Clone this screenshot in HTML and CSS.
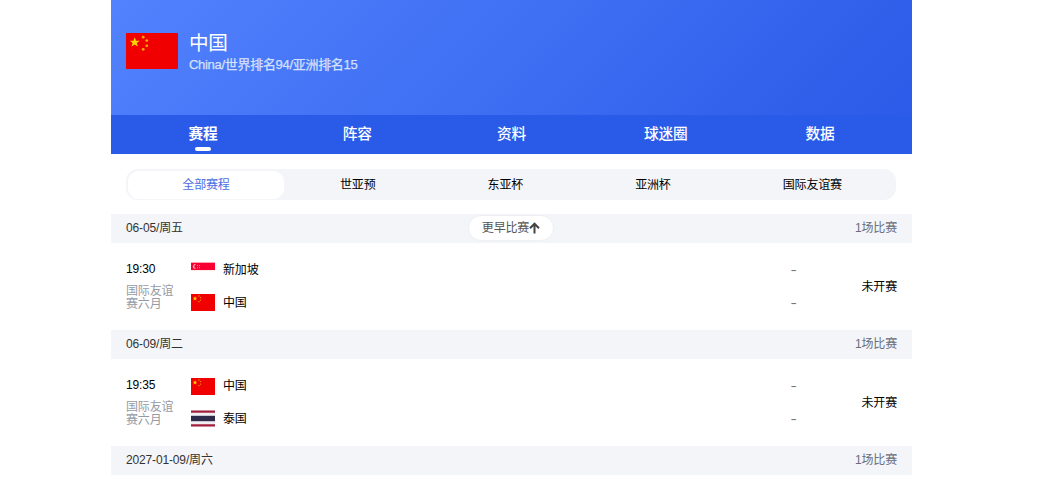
FILE: index.html
```html
<!DOCTYPE html>
<html lang="zh-CN">
<head>
<meta charset="utf-8">
<title>中国</title>
<link rel="stylesheet" href="styles.css">
</head>
<body>
<svg class="defs" aria-hidden="true">
  <symbol id="cn" viewBox="0 0 52 36" preserveAspectRatio="none">
    <rect width="52" height="36" fill="#f00000"/>
    <path fill="#ffd400" d="M8.7 4.2l1.3 3.5h3.7l-2.9 2.2 1.1 3.6-3.2-2.1-3.2 2.1 1.1-3.6-2.9-2.2h3.7z"/>
    <g fill="#f5a800"><circle cx="17.2" cy="4.2" r="1.4"/><circle cx="20.8" cy="7.6" r="1.4"/><circle cx="20.8" cy="12.8" r="1.4"/><circle cx="17.2" cy="16.3" r="1.4"/></g>
  </symbol>
</svg>
<main class="page">
  <header class="hero">
    <svg class="hero-flag"><use href="#cn"/></svg>
    <div class="team">
      <h1 class="team-name">中国</h1>
      <p class="team-info">China/世界排名94/亚洲排名15</p>
    </div>
  </header>
  <nav class="tabs">
    <a class="tab active">赛程</a><a class="tab">阵容</a><a class="tab">资料</a><a class="tab">球迷圈</a><a class="tab">数据</a>
  </nav>
  <nav class="filters">
    <a class="filter selected">全部赛程</a><a class="filter">世亚预</a><a class="filter">东亚杯</a><a class="filter">亚洲杯</a><a class="filter">国际友谊赛</a>
  </nav>
  <div class="day">
    <span>06-05/周五</span>
    <button class="earlier">更早比赛<svg class="arrow" viewBox="0 0 11 12"><path d="M5.5 11.5V2M1 6.2l4.5-4.5L10 6.2" fill="none" stroke="#444" stroke-width="2"/></svg></button>
    <span class="count">1场比赛</span>
  </div>
  <section class="match">
    <div class="when"><time class="time">19:30</time><span class="league">国际友谊赛六月</span></div>
    <div class="sides">
      <div class="side"><svg class="flag" viewBox="0 0 24 17"><path fill="#fff" d="M0 0h24v17H0z"/><path fill="#f9a3b3" d="M0 0h24v1H0z"/><path fill="#fa0032" d="M0 1h24v7H0z"/><path fill="#fdd" d="M0 8h24v.6H0z"/><path d="M5.2 2.2a2.5 2.5 0 1 0 0 4.7 2.4 2.4 0 0 1 0-4.7z" fill="#fbb"/><path d="M6 3h1v1H6zm2 0h1v1H8zm-2 2.3h1v1H6zm2 0h1v1H8z" fill="#f88ca0"/></svg><span class="name">新加坡</span><span class="score">-</span></div>
      <div class="side"><svg class="flag"><use href="#cn"/></svg><span class="name">中国</span><span class="score">-</span></div>
    </div>
    <span class="status">未开赛</span>
  </section>
  <div class="day"><span>06-09/周二</span><span class="count">1场比赛</span></div>
  <section class="match">
    <div class="when"><time class="time">19:35</time><span class="league">国际友谊赛六月</span></div>
    <div class="sides">
      <div class="side"><svg class="flag"><use href="#cn"/></svg><span class="name">中国</span><span class="score">-</span></div>
      <div class="side"><svg class="flag" viewBox="0 0 24 17" preserveAspectRatio="none"><path fill="#f1eef4" d="M0 0h24v17H0z"/><path fill="#a4203d" d="M0 .5h24v2.3H0zM0 14.2h24v2.3H0z"/><path fill="#2d2a4a" d="M0 5.8h24v5.4H0z"/></svg><span class="name">泰国</span><span class="score">-</span></div>
    </div>
    <span class="status">未开赛</span>
  </section>
  <div class="day"><span>2027-01-09/周六</span><span class="count">1场比赛</span></div>
</main>
</body>
</html>
```
FILE: styles.css
```css
* { box-sizing: border-box; }
body { margin: 0; background: #fff; color: #000; font: 12px/16px "Liberation Sans", "Noto Sans CJK SC", sans-serif; letter-spacing: -.15px; overflow: hidden; }
.defs { display: none; }
.page { width: 801px; margin-left: 111px; }
.hero { display: flex; height: 115px; padding: 30px 15px 0; gap: 11px; background: linear-gradient(135deg, #5282fd 0%, #2b5be8 100%); color: #fff; }
.hero-flag { width: 52px; height: 36px; margin-top: 3.4px; }
.team-name { margin: 0; font-size: 19.6px; line-height: 26px; font-weight: 400; letter-spacing: -.4px; }
.team-info { margin: 0; font-size: 13px; line-height: 17px; letter-spacing: -.3px; color: #d6e0fd; -webkit-text-stroke: .25px #d6e0fd; }
.tabs { display: flex; height: 39px; padding: 0 15px; background: #2a5be8; color: #fff; font-size: 14.7px; line-height: 39px; font-weight: 500; letter-spacing: -.2px; }
.tab { flex: 1; text-align: center; }
.active { display: flex; flex-direction: column; align-items: center; font-weight: 700; line-height: 32px; padding-top: 3px; }
.active::after { content: ""; width: 16px; height: 4px; margin-top: -3px; border-radius: 2px; background: #fff; }
.filters { display: flex; width: 770px; height: 31px; margin: 15px 15px 14px; padding: 2px; border-radius: 12px; background: #f4f5f9; line-height: 28px; }
.filter { flex: none; padding: 0 56px; white-space: nowrap; }
.selected { width: 156px; height: 28px; padding: 0; border-radius: 11px; background: #fff; color: #4d6de3; text-align: center; }
.day { display: flex; position: relative; justify-content: space-between; align-items: center; height: 29px; padding: 0 15px 2px; background: #f4f5f9; color: #333; }
.count { color: #686d7c; }
.earlier { display: flex; position: absolute; left: 357px; top: 1px; align-items: center; justify-content: center; width: 86px; height: 26px; padding: 0; border: 1px solid #eeeff3; border-radius: 13px; background: #fff; color: #555; font: inherit; letter-spacing: inherit; }
.arrow { width: 11px; height: 12px; }
.match { display: flex; height: 87px; padding: 0 15px; }
.when { display: flex; flex-direction: column; width: 65px; padding-top: 18px; }
.time { line-height: 16px; }
.league { width: 48px; margin-top: 8px; line-height: 13px; color: #969aa4; }
.sides { flex: 1; padding-top: 11px; }
.side { display: flex; align-items: center; height: 32.5px; }
.flag { width: 24px; height: 17px; margin-right: 8px; }
.score { margin-left: auto; margin-right: 64px; width: 7px; transform: scaleX(1.6); color: #777; text-align: center; }
.status { width: 36px; line-height: 88px; text-align: right; white-space: nowrap; }
```
